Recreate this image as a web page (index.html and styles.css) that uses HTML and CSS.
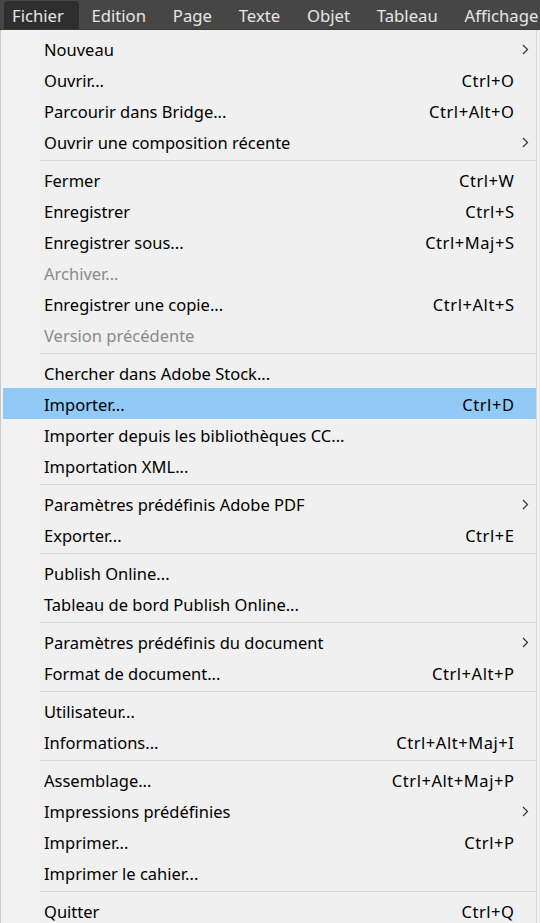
FILE: index.html
```html
<!DOCTYPE html>
<html lang="fr">
<head>
<meta charset="utf-8">
<link rel="stylesheet" href="styles.css">
</head>
<body>
<div class="menubar">
  <div class="mb-item active">Fichier</div>
  <div class="mb-item">Edition</div>
  <div class="mb-item">Page</div>
  <div class="mb-item">Texte</div>
  <div class="mb-item">Objet</div>
  <div class="mb-item">Tableau</div>
  <div class="mb-item">Affichage</div>
</div>
<div class="menu">
  <div class="row"><span class="label">Nouveau</span><span class="arrow"><svg width="7" height="11" viewBox="0 0 7 11"><path d="M1 1 L5.5 5.5 L1 10" fill="none" stroke="#333" stroke-width="1.2"/></svg></span></div>
  <div class="row"><span class="label">Ouvrir...</span><span class="key">Ctrl+O</span></div>
  <div class="row"><span class="label">Parcourir dans Bridge...</span><span class="key">Ctrl+Alt+O</span></div>
  <div class="row"><span class="label">Ouvrir une composition récente</span><span class="arrow"><svg width="7" height="11" viewBox="0 0 7 11"><path d="M1 1 L5.5 5.5 L1 10" fill="none" stroke="#333" stroke-width="1.2"/></svg></span></div>
  <div class="sep"></div>
  <div class="row"><span class="label">Fermer</span><span class="key">Ctrl+W</span></div>
  <div class="row"><span class="label">Enregistrer</span><span class="key">Ctrl+S</span></div>
  <div class="row"><span class="label">Enregistrer sous...</span><span class="key">Ctrl+Maj+S</span></div>
  <div class="row disabled"><span class="label">Archiver...</span></div>
  <div class="row"><span class="label">Enregistrer une copie...</span><span class="key">Ctrl+Alt+S</span></div>
  <div class="row disabled"><span class="label">Version précédente</span></div>
  <div class="sep"></div>
  <div class="row"><span class="label">Chercher dans Adobe Stock...</span></div>
  <div class="row hl"><span class="label">Importer...</span><span class="key">Ctrl+D</span></div>
  <div class="row"><span class="label">Importer depuis les bibliothèques CC...</span></div>
  <div class="row"><span class="label">Importation XML...</span></div>
  <div class="sep"></div>
  <div class="row"><span class="label">Paramètres prédéfinis Adobe PDF</span><span class="arrow"><svg width="7" height="11" viewBox="0 0 7 11"><path d="M1 1 L5.5 5.5 L1 10" fill="none" stroke="#333" stroke-width="1.2"/></svg></span></div>
  <div class="row"><span class="label">Exporter...</span><span class="key">Ctrl+E</span></div>
  <div class="sep"></div>
  <div class="row"><span class="label">Publish Online...</span></div>
  <div class="row"><span class="label">Tableau de bord Publish Online...</span></div>
  <div class="sep"></div>
  <div class="row"><span class="label">Paramètres prédéfinis du document</span><span class="arrow"><svg width="7" height="11" viewBox="0 0 7 11"><path d="M1 1 L5.5 5.5 L1 10" fill="none" stroke="#333" stroke-width="1.2"/></svg></span></div>
  <div class="row"><span class="label">Format de document...</span><span class="key">Ctrl+Alt+P</span></div>
  <div class="sep"></div>
  <div class="row"><span class="label">Utilisateur...</span></div>
  <div class="row"><span class="label">Informations...</span><span class="key">Ctrl+Alt+Maj+I</span></div>
  <div class="sep"></div>
  <div class="row"><span class="label">Assemblage...</span><span class="key">Ctrl+Alt+Maj+P</span></div>
  <div class="row"><span class="label">Impressions prédéfinies</span><span class="arrow"><svg width="7" height="11" viewBox="0 0 7 11"><path d="M1 1 L5.5 5.5 L1 10" fill="none" stroke="#333" stroke-width="1.2"/></svg></span></div>
  <div class="row"><span class="label">Imprimer...</span><span class="key">Ctrl+P</span></div>
  <div class="row"><span class="label">Imprimer le cahier...</span></div>
  <div class="sep"></div>
  <div class="row"><span class="label">Quitter</span><span class="key">Ctrl+Q</span></div>
</div>
</body>
</html>
```
FILE: styles.css
```css
html, body {
  margin: 0;
  padding: 0;
  background: #f0f0f0;
  overflow: hidden;
}
body {
  width: 540px;
  height: 923px;
  font-family: "Noto Sans", "Open Sans", sans-serif;
}
.menubar {
  height: 30px;
  background: #464646;
  display: flex;
  align-items: stretch;
  border-bottom: 1px solid #3a3a3a;
  box-sizing: border-box;
  white-space: nowrap;
  overflow: hidden;
}
.mb-item {
  color: #e6e6e6;
  font-size: 16.7px;
  line-height: 27px;
  padding: 2px 13.4px 0;
  flex-shrink: 0;
}
.mb-item.active {
  background: #2e2e2e;
  border-radius: 4px 4px 0 0;
  margin: 1px 0 0 4px;
  line-height: 27px;
  padding: 1px 15px 0 8px;
}
.mb-item.active + .mb-item {
  padding-left: 12.5px;
}
.menu {
  width: 537px;
  height: 893px;
  box-sizing: border-box;
  border-left: 1px solid #c8c8c8;
  border-right: 1px solid #d8d8d8;
  background: linear-gradient(to right, #f2f2f2 0, #f2f2f2 39px, #f0f0f0 39px);
  padding-top: 3px;
}
.row {
  height: 31px;
  display: flex;
  align-items: center;
  padding: 1px 22px 0 43px;
  box-sizing: border-box;
  font-size: 16.5px;
  color: #000;
  white-space: nowrap;
}
.row.hl {
  background: #91c9f7;
  margin-left: 2px;
  padding-left: 41px;
}
.row.disabled {
  color: #8a8a8a;
}
.label {
  flex: 1;
}
.key {
  text-align: right;
  letter-spacing: 0.55px;
  margin-right: -0.5px;
}
.arrow {
  display: flex;
  margin-right: -15px;
}
.sep {
  height: 1px;
  background: #d7d7d7;
  margin: 3px 0 3px 39px;
}
```
